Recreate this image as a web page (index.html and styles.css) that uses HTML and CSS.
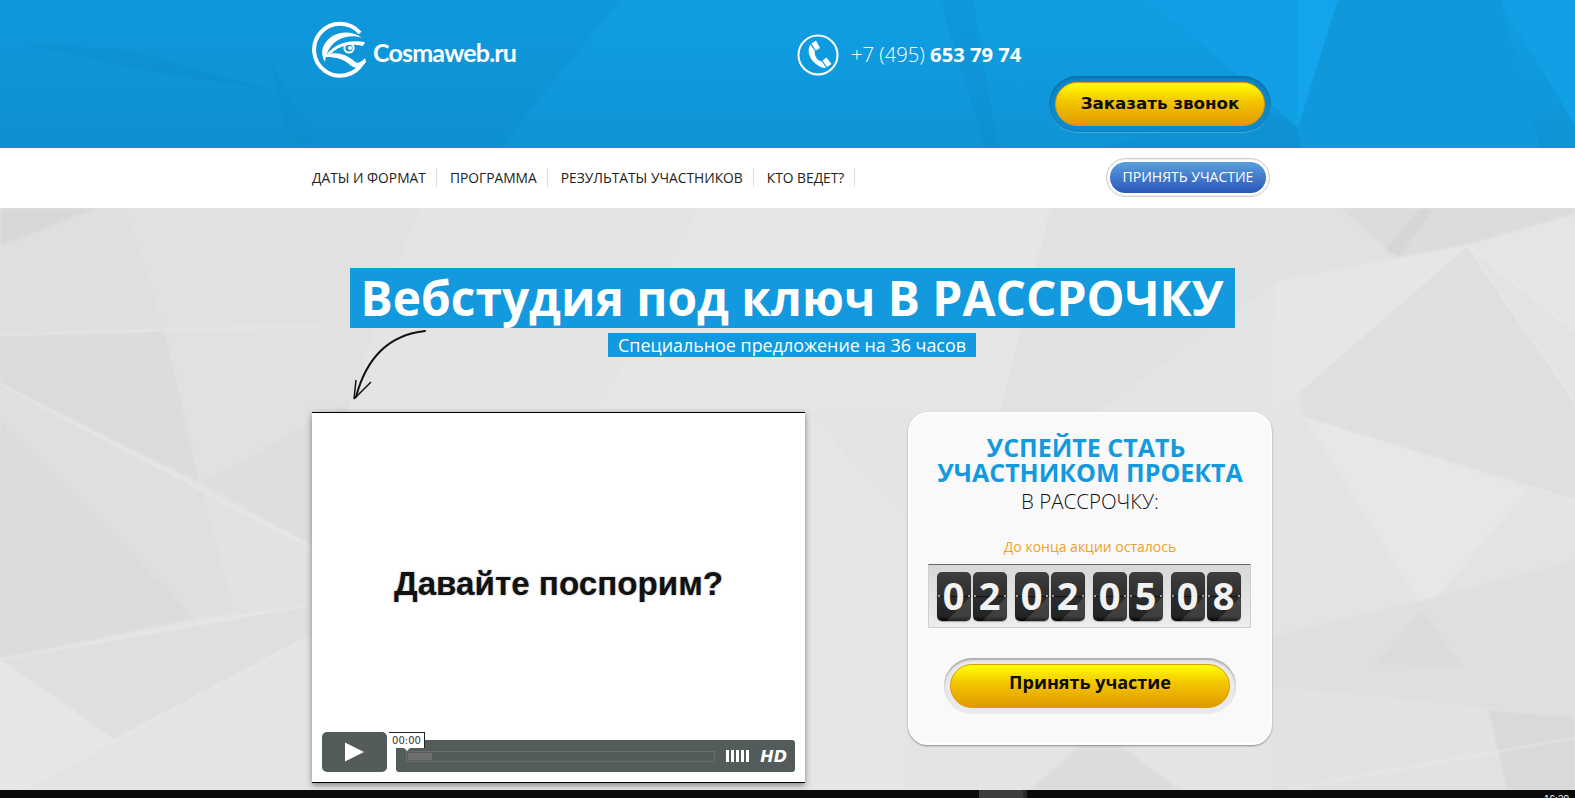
FILE: index.html
```html
<!DOCTYPE html>
<html lang="ru">

<head>
    <meta charset="UTF-8">
    <title>Вебстудия под ключ в рассрочку</title>
    <link rel="stylesheet" href="styles.css">
</head>

<body>
    <header class="top">
        <svg class="facets" viewBox="0 0 1575 148" preserveAspectRatio="none">
            <polygon fill="#0b7fbc" opacity=".16" points="0,0 620,0 500,148 0,148"/>
            <polygon fill="#0b7fba" opacity=".18" points="25,44 130,50 270,90 150,72"/>
            <polygon fill="#0b7fba" opacity=".1" points="270,60 320,148 290,148"/>
            <polygon fill="#0c83c2" opacity=".22" points="940,0 973,0 998,148 985,148"/>
            <polygon fill="#11a0e6" points="1150,0 1298,0 1298,128"/>
            <polygon fill="#13a4ec" points="1298,0 1338,0 1298,128"/>
            <polygon fill="#0f98dc" points="1338,0 1500,0 1540,148 1300,148 1298,128"/>
            <polygon fill="#11a0e6" points="1500,0 1575,0 1575,125"/>
            <polygon fill="#0c83c2" opacity=".14" points="1255,105 1298,128 1300,148 1100,148"/>
        </svg>
        <div class="wrap top-row">
            <a class="logo" href="#">
                <svg class="logo-mark" viewBox="0 0 58 58" width="58" height="58">
                    <path fill="none" stroke="#fff" stroke-width="4" d="M48 12A26 26 0 1 0 51 41"/>
                    <path fill="#fff" d="M50 17C38 8 20 10 12 24C9 30 10 36 13 41C14 32 18 24 26 19C33 15 43 14 50 17Z"/>
                    <path fill="#fff" d="M14 34C22 24 34 18 53 21L51 25C38 22 27 25 20 32Z"/>
                    <path fill="#fff" d="M14 34C24 30 34 33 42 40C45 43 49 42 53 37L54 41C48 49 42 48 37 43C30 37 22 36 14 36Z"/>
                    <circle cx="37" cy="27" r="4.600" fill="none" stroke="#fff" stroke-width="2"/>
                    <circle cx="38" cy="27" r="2" fill="#fff"/>
                </svg>
                <span class="logo-text">Cosmaweb.ru</span>
            </a>
            <div class="phone">
                <svg class="phone-icon" viewBox="0 0 42 42" width="42" height="42">
                    <circle cx="21" cy="21" r="19.500" fill="none" stroke="#fff" stroke-width="2"/>
                    <path fill="#fff" d="M14.500 9.500L19 6.500L23 14L18.800 16.600Z"/>
                    <path fill="#fff" d="M25.500 26.500L29.500 23.500L34.500 30L30 33Z"/>
                    <path fill="#fff" d="M13.500 10.500C8.500 18 14 30 27 34L29 33.500L24.800 27.500C20.500 27 17 21.500 17.800 17Z"/>
                </svg>
                <span class="phone-num">+7 (495) <b>653 79 74</b></span>
            </div>
            <a class="btn-ring btn-ring-dark call" href="#"><span class="btn-yellow call-inner">Заказать звонок</span></a>
        </div>
    </header>

    <nav class="menu">
        <div class="wrap menu-row">
            <a href="#">ДАТЫ И ФОРМАТ</a>
            <a href="#">ПРОГРАММА</a>
            <a href="#">РЕЗУЛЬТАТЫ УЧАСТНИКОВ</a>
            <a href="#">КТО ВЕДЕТ?</a>
            <a class="btn-blue-ring" href="#"><span class="btn-blue">ПРИНЯТЬ УЧАСТИЕ</span></a>
        </div>
    </nav>

    <main class="content">
        <svg class="facets facets-soft" viewBox="0 208 1575 582" preserveAspectRatio="none">
            <polygon fill="#d8d8d8" points="0,208 97,208 0,247"/>
            <polygon fill="#dfdfdf" points="0,247 97,208 127,208 165,330 0,335"/>
            <polygon fill="#e1e1e1" points="127,208 420,208 350,400 200,483 165,330"/>
            <polygon fill="#dcdcdc" points="0,335 165,330 200,483 0,384"/>
            <polygon fill="#dedede" points="200,483 350,400 320,550"/>
            <polygon fill="#dcdcdc" points="0,417 197,618 0,659"/>
            <polygon fill="#dfdfdf" points="0,384 310,547 310,605 197,618 0,417"/>
            <polygon fill="#e2e2e2" points="200,483 310,547 310,605 235,612"/>
            <polygon fill="#dfdfdf" points="0,659 310,605 310,636 115,740"/>
            <polygon fill="#e6e6e6" points="0,659 115,740 20,790 0,790"/>
            <polygon fill="#e4e4e4" points="115,740 310,636 400,790 20,790"/>
            <polygon fill="#e4e4e4" points="420,208 700,208 600,410 350,400"/>
            <polygon fill="#e6e6e6" points="700,208 1050,208 1000,410 600,410"/>
            <polygon fill="#e6e6e6" points="805,410 905,520 905,790 805,790"/>
            <polygon fill="#e1e1e1" points="1050,208 1272,208 1275,282 1100,410 1000,410"/>
            <polygon fill="#e1e1e1" points="1272,208 1467,208 1467,245 1275,282"/>
            <polygon fill="#dcdcdc" points="1340,208 1468,208 1467,245 1398,257"/>
            <polygon fill="#d6d6d6" points="1398,257 1435,208 1420,208 1385,250"/>
            <polygon fill="#dcdcdc" points="1468,208 1575,208 1575,214 1467,245"/>
            <polygon fill="#e5e5e5" points="1467,245 1575,214 1575,331"/>
            <polygon fill="#e6e6e6" points="1275,282 1467,245 1298,392 1272,412"/>
            <polygon fill="#dfdfdf" points="1467,245 1575,402 1575,501 1305,418 1298,392"/>
            <polygon fill="#e3e3e3" points="1467,245 1575,331 1575,402"/>
            <polygon fill="#e7e7e7" points="1305,418 1528,489 1425,611"/>
            <polygon fill="#e3e3e3" points="1272,420 1305,418 1425,611 1272,636"/>
            <polygon fill="#e3e3e3" points="1528,489 1575,501 1575,560 1425,611"/>
            <polygon fill="#dfdfdf" points="1272,636 1425,600 1575,560 1575,717 1272,687"/>
            <polygon fill="#dbdbdb" points="1375,664 1422,611 1462,667"/>
            <polygon fill="#e2e2e2" points="1272,687 1488,710 1507,790 1272,790"/>
            <polygon fill="#d9d9d9" points="1488,710 1575,717 1575,790 1507,790"/>
            <polygon fill="#dcdcdc" points="1030,790 1080,745 1120,745 1180,790"/>
            <g stroke="#ebebeb" stroke-width="1.200" fill="none">
                <path d="M0 335L320 326"/>
                <path d="M0 384L310 547"/>
                <path d="M0 659L310 605"/>
                <path d="M20 790L310 636"/>
                <path d="M1467 245L1298 392"/>
                <path d="M1467 245L1575 402"/>
                <path d="M1467 245L1575 331"/>
                <path d="M1305 418L1575 501"/>
                <path d="M1288 789L1575 738"/>
            </g>
        </svg>
        <div class="wrap">
            <div class="hero">
                <h1 class="hero-title">Вебстудия под ключ В РАССРОЧКУ</h1>
                <p class="hero-sub">Специальное предложение на 36 часов</p>
            </div>

            <svg class="arrow" viewBox="0 0 80 75" width="80" height="75" fill="none" stroke="#111">
                <path stroke-width="2" stroke-linecap="round" d="M72 2C35 6 13 30 3 68"/>
                <path stroke-width="1.500" d="M1 70L3 51M1 70L18 53"/>
            </svg>

            <div class="columns">
                <section class="video">
                    <div class="video-screen">Давайте поспорим?</div>
                    <div class="video-controls">
                        <div class="play"><svg viewBox="0 0 20 20" width="19" height="20"><polygon fill="#fff" points="0,0 20,10 0,20"/></svg></div>
                        <div class="bar">
                            <div class="track"><div class="loaded"></div></div>
                            <div class="volume"><i></i><i></i><i></i><i></i><i></i></div>
                            <span class="hd">HD</span>
                        </div>
                        <div class="time">00:00</div>
                    </div>
                </section>

                <aside class="card">
                    <h2 class="card-title"><span class="card-first">УСПЕЙТЕ СТАТЬ</span><br>УЧАСТНИКОМ ПРОЕКТА</h2>
                    <div class="card-sub">В РАССРОЧКУ:</div>
                    <div class="card-left">До конца акции осталось</div>
                    <div class="timer">
                        <div class="pair"><span class="digit">0</span><span class="digit">2</span></div>
                        <div class="pair"><span class="digit">0</span><span class="digit">2</span></div>
                        <div class="pair"><span class="digit">0</span><span class="digit">5</span></div>
                        <div class="pair"><span class="digit">0</span><span class="digit">8</span></div>
                    </div>
                    <a class="btn-ring join" href="#"><span class="btn-yellow join-inner">Принять участие</span></a>
                </aside>
            </div>
        </div>
    </main>

    <footer class="taskbar">
        <div class="task-item"></div>
        <span class="clock">16:30</span>
    </footer>
</body>

</html>
```

FILE: styles.css
```css
body {
    font-family: 'Open Sans', sans-serif;
    margin: 0;
    height: 798px;
    overflow: hidden;
    display: flex;
    flex-direction: column;
    background-color: #e4e4e4;
    color: #111;
}

a {
    color: inherit;
    text-decoration: none;
}

.wrap {
    width: 960px;
    margin-left: 312px;
    position: relative;
}

.facets {
    position: absolute;
    left: 0;
    top: 0;
    width: 100%;
    height: 100%;
    filter: blur(0.5px);
}

.facets-soft {
    filter: blur(1px);
}

/* шапка */
.top {
    position: relative;
    height: 148px;
    flex: none;
    background: linear-gradient(#109ee3, #0f99dd 55%, #0e94d6);
    overflow: hidden;
}

.top-row {
    display: flex;
    height: 148px;
}

.logo {
    display: flex;
    align-items: center;
    align-self: flex-start;
    margin-top: 21px;
    width: 485px;
}

.logo-text {
    color: #fff;
    font-family: 'Lato', sans-serif;
    font-weight: 700;
    font-size: 25px;
    letter-spacing: -0.8px;
    margin-left: 3px;
    position: relative;
    top: 2px;
}

.phone {
    display: flex;
    align-items: center;
    align-self: flex-start;
    margin-top: 34px;
    color: #fff;
    font-size: 20.200px;
    font-weight: 300;
}

.phone-num {
    margin-left: 12px;
    position: relative;
    top: -1px;
}

.phone-num b {
    font-weight: 700;
}

.btn-ring {
    display: block;
    border-radius: 40px;
    padding: 6px;
}

.btn-ring-dark {
    background: #0d88c8;
    box-shadow: inset 0 2px 3px rgba(0, 60, 100, 0.35), 0 1px 0 rgba(255, 255, 255, 0.2);
}

.call {
    position: absolute;
    right: 1px;
    top: 76px;
    width: 210px;
}

.btn-yellow {
    display: block;
    border-radius: 30px;
    background: linear-gradient(#ffff00, #f3c400 45%, #e09a00);
    border: 1px solid #dc9c08;
    box-sizing: border-box;
    text-align: center;
    font-weight: 700;
    color: #0c0c0c;
}

.call-inner {
    height: 44px;
    line-height: 40px;
    font-family: 'DejaVu Sans', sans-serif;
    font-size: 16.700px;
}

/* меню */
.menu {
    height: 60px;
    flex: none;
    background: #fff;
    position: relative;
}

.menu-row {
    display: flex;
    align-items: center;
    height: 60px;
    font-size: 13.800px;
    color: #222;
}

.menu-row > a:not(.btn-blue-ring) {
    padding-right: 10px;
    margin-right: 13px;
    border-right: 1px solid #dedede;
    line-height: 19px;
    position: relative;
    top: -1px;
}

.btn-blue-ring {
    position: absolute;
    right: 2px;
    top: 10px;
    padding: 3px;
    border-radius: 24px;
    border: 1px solid #cfcfcf;
    box-shadow: inset 0 0 0 1px #eee;
}

.btn-blue {
    display: block;
    width: 156px;
    height: 31px;
    line-height: 30px;
    border-radius: 20px;
    background: linear-gradient(#5a9fdc, #2a56bb);
    color: #fff;
    font-size: 14px;
    text-align: center;
}

/* основной блок */
.content {
    flex: 1;
    position: relative;
    overflow: hidden;
}

.hero {
    display: flex;
    flex-direction: column;
    align-items: center;
    padding-top: 60px;
}

.hero-title {
    margin: 0;
    padding: 0 11px;
    background: #1399dd;
    color: #fff;
    font-size: 47.900px;
    font-weight: 700;
    line-height: 60px;
    white-space: nowrap;
}

.hero-sub {
    margin: 5px 0 0;
    padding: 0 10.500px;
    background: #1399dd;
    color: #fff;
    font-size: 17.900px;
    line-height: 24px;
}

.arrow {
    position: absolute;
    left: 41px;
    top: 121px;
    overflow: visible;
}

.columns {
    display: flex;
    justify-content: space-between;
    margin-top: 55px;
}

/* плеер */
.video {
    width: 493px;
    height: 371px;
    box-sizing: border-box;
    background: #fff;
    border-top: 1px solid #000;
    border-bottom: 1px solid #000;
    box-shadow: 0 2px 6px rgba(0, 0, 0, 0.45);
    position: relative;
}

.video-screen {
    padding-top: 151px;
    text-align: center;
    font-family: 'Liberation Sans', sans-serif;
    font-weight: 700;
    font-size: 33.200px;
    line-height: 40px;
    color: #111;
    text-shadow: 0 0 2px rgba(0, 0, 0, 0.4);
}

.video-controls {
    position: absolute;
    left: 10px;
    right: 10px;
    bottom: 10px;
    height: 40px;
    display: flex;
    align-items: flex-end;
    justify-content: space-between;
}

.play {
    width: 65px;
    height: 40px;
    background: #535c5a;
    border-radius: 5px;
    display: flex;
    align-items: center;
    justify-content: center;
}

.bar {
    width: 399px;
    height: 32px;
    box-sizing: border-box;
    padding: 0 8px 0 10px;
    background: #535c5a;
    border-radius: 3px;
    display: flex;
    align-items: center;
}

.track {
    width: 309px;
    height: 11px;
    box-sizing: border-box;
    border: 1px solid #666d6b;
    padding: 1px;
}

.loaded {
    width: 24px;
    height: 100%;
    background: #6e6e6e;
}

.volume {
    display: flex;
    gap: 2px;
    margin-left: 11px;
}

.volume i {
    width: 3px;
    height: 12px;
    background: #fff;
}

.hd {
    margin-left: auto;
    color: #fff;
    font-family: 'DejaVu Sans', sans-serif;
    font-style: italic;
    font-weight: 700;
    font-size: 16px;
}

.time {
    position: absolute;
    left: 67px;
    top: 0;
    width: 36px;
    height: 16px;
    box-sizing: border-box;
    background: #fff;
    border-top: 1px solid #222;
    border-right: 1px solid #222;
    font-family: 'DejaVu Sans', sans-serif;
    font-size: 10px;
    line-height: 15px;
    text-align: center;
    color: #333;
}

.time::after {
    content: "";
    position: absolute;
    left: 15px;
    top: 15px;
    border: 3px solid transparent;
    border-top-color: #fff;
}

/* карточка */
.card {
    width: 364px;
    height: 333px;
    box-sizing: border-box;
    background: #faf9fa;
    border: 2px solid #fff;
    border-radius: 20px;
    box-shadow: 0 1px 2px rgba(0, 0, 0, 0.4);
    display: flex;
    flex-direction: column;
    align-items: center;
    padding-top: 21px;
}

.card-title {
    margin: 0;
    color: #1399dd;
    font-size: 25px;
    font-weight: 700;
    line-height: 25px;
    text-align: center;
}

.card-first {
    margin-right: 8px;
}

.card-sub {
    font-size: 20.500px;
    font-weight: 300;
    line-height: 28px;
    margin-top: 2px;
    color: #111;
}

.card-left {
    margin-top: 22px;
    font-size: 14px;
    line-height: 20px;
    color: #e9a328;
}

.timer {
    margin: 7px 0 0 -2px;
    width: 323px;
    height: 64px;
    box-sizing: border-box;
    padding-left: 8px;
    display: flex;
    gap: 8px;
    align-items: center;
    background: linear-gradient(#d8d8d8, #ededed);
    border: 1px solid #cfcfcf;
    border-top: 1px solid #666;
}

.pair {
    display: flex;
    gap: 2px;
}

.digit {
    width: 34px;
    height: 49px;
    border-radius: 5px;
    background:
        radial-gradient(circle at 2px 24px, #999 1px, transparent 1.500px),
        radial-gradient(circle at 32px 24px, #999 1px, transparent 1.500px),
        linear-gradient(135deg, transparent 70%, rgba(255, 255, 255, 0.12) 70%),
        linear-gradient(#3e3e3e, #2e2e2e 49%, #111 49%, #111 51%, #2b2b2b 52%, #242424 90%, #050505);
    box-shadow: 0 1px 1px rgba(0, 0, 0, 0.3);
    color: #f2f2f2;
    font-weight: 700;
    font-size: 38px;
    line-height: 47px;
    text-align: center;
}

.join {
    width: 292px;
    box-sizing: border-box;
    margin-top: 30px;
    background: #eaeaea;
    box-shadow: inset 0 2px 2px #aaa;
}

.join-inner {
    height: 44px;
    line-height: 34px;
    font-size: 18px;
}

/* панель задач */
.taskbar {
    height: 8px;
    flex: none;
    background: #0b0b0b;
    position: relative;
    overflow: hidden;
}

.task-item {
    position: absolute;
    left: 979px;
    top: 0;
    width: 44px;
    height: 8px;
    background: #3c3c3c;
    border-right: 4px solid #2a2a2a;
}

.clock {
    position: absolute;
    left: 1544px;
    top: 4px;
    font-family: 'Liberation Sans', sans-serif;
    font-size: 10px;
    line-height: 12px;
    color: #fff;
}
```
